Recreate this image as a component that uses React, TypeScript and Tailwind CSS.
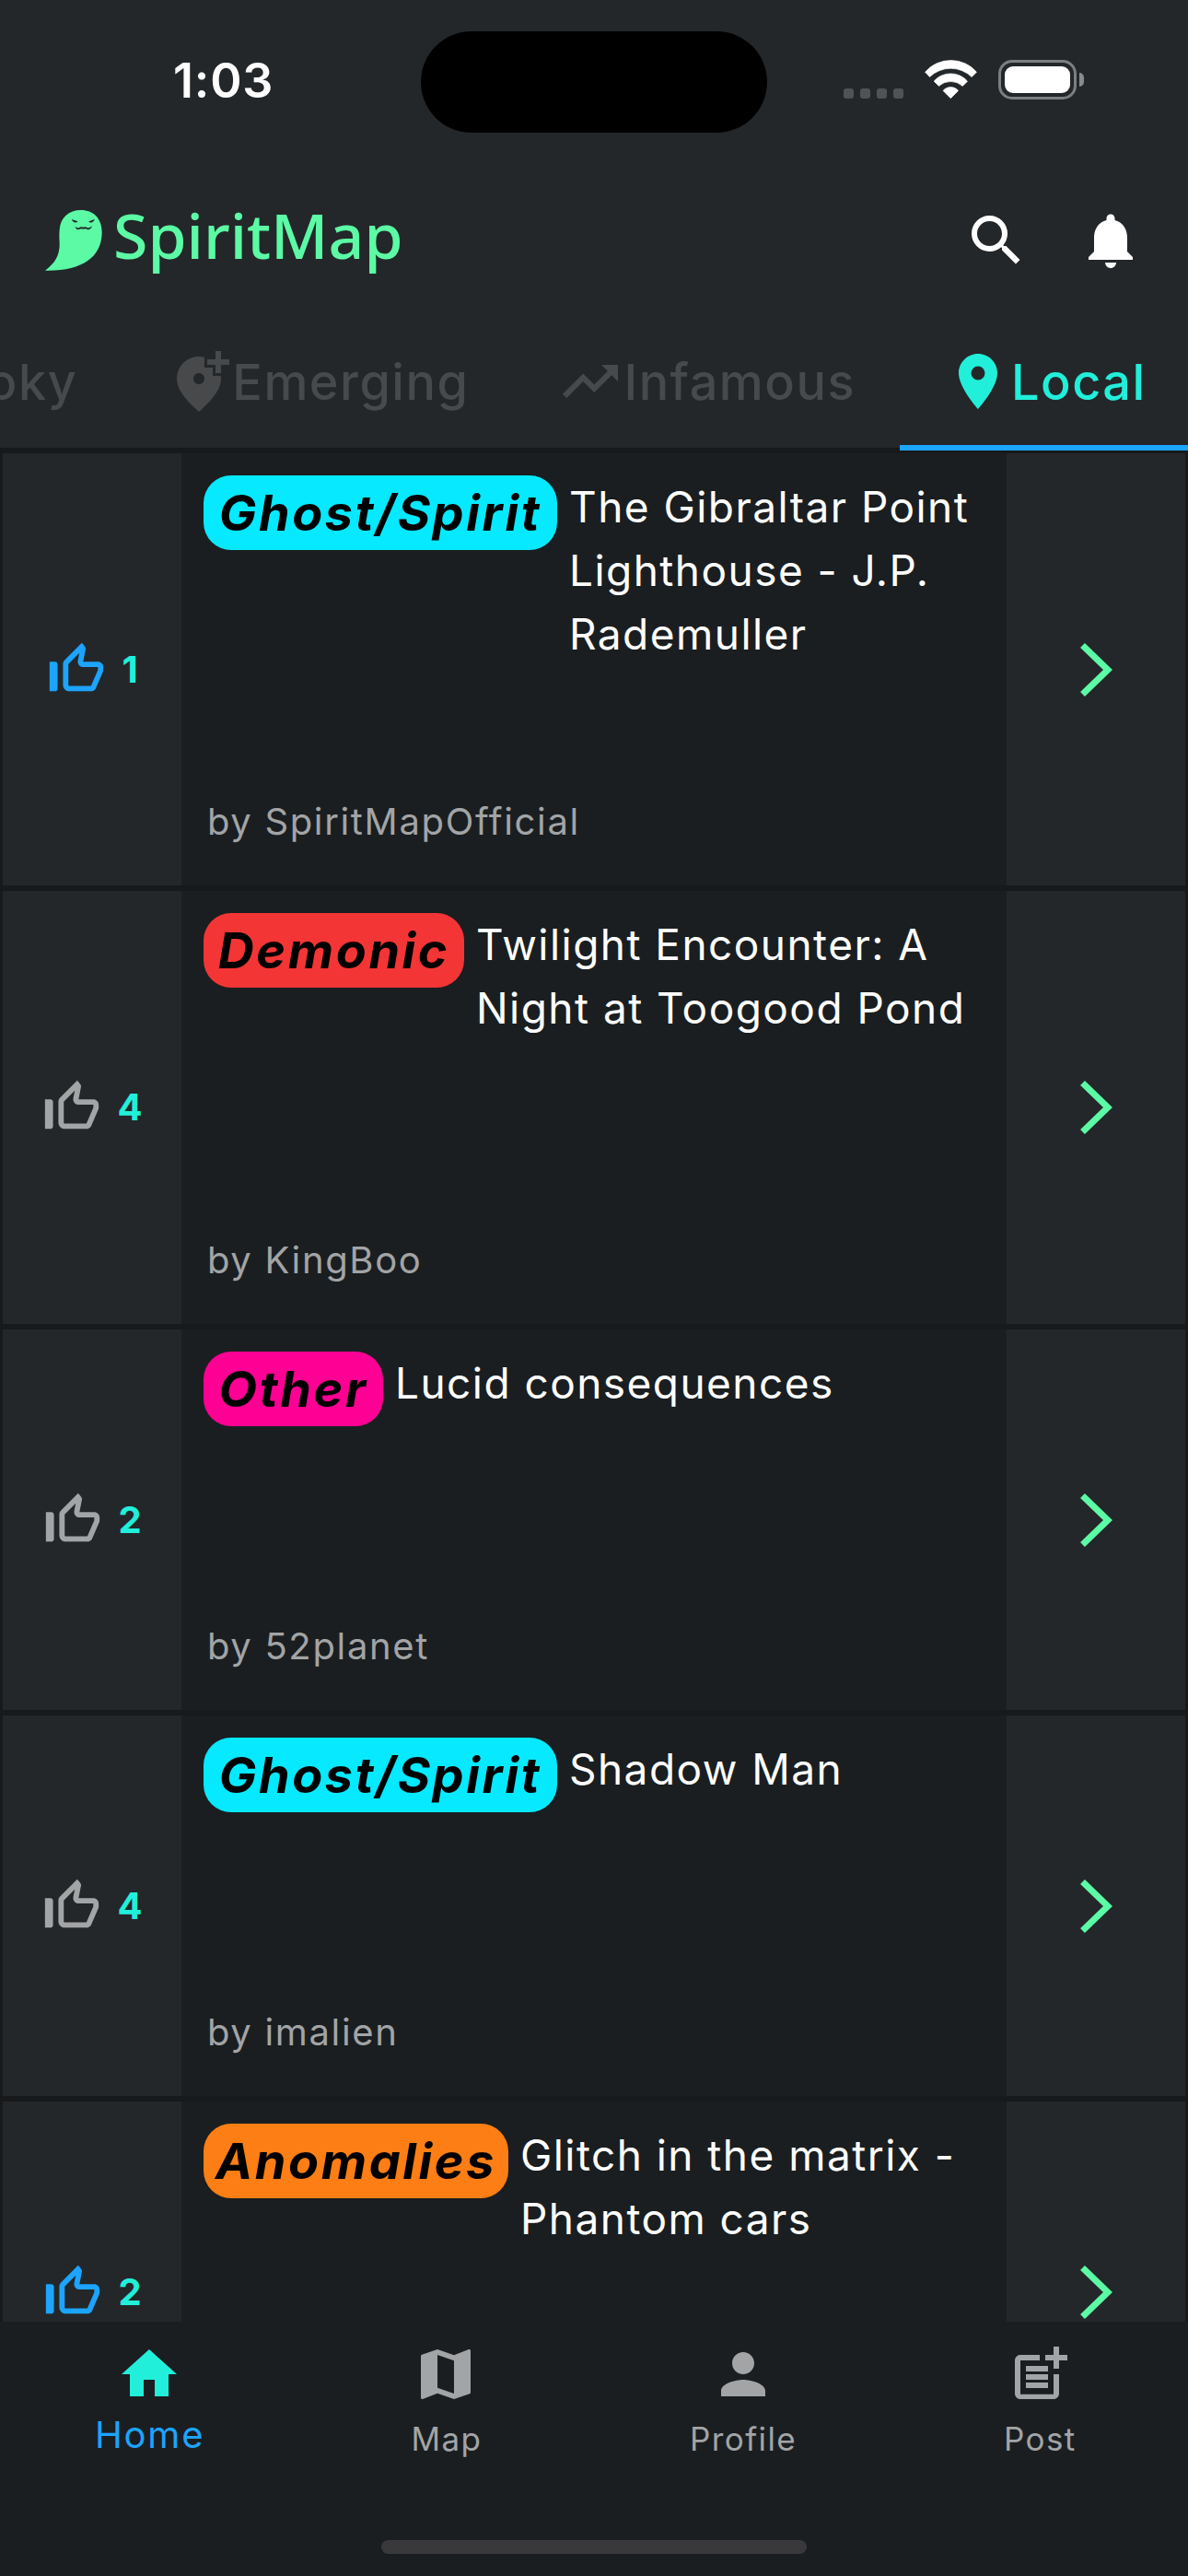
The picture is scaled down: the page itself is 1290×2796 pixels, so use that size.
import React from "react";
import type { IconType } from "react-icons";
import { MdSearch, MdNotifications, MdAddLocationAlt, MdTrendingUp, MdLocationOn, MdHome, MdMap, MdPerson, MdOutlinePostAdd } from "react-icons/md";

type Post = { tag: string; badge: string; title: string; author: string; likes: number; liked: boolean; height: string };

const posts: Post[] = [
  { tag: "Ghost/Spirit", badge: "w-[384px] bg-[#06e9ff]", title: "The Gibraltar Point Lighthouse - J.P. Rademuller", author: "SpiritMapOfficial", likes: 1, liked: true, height: "h-[475px]" },
  { tag: "Demonic", badge: "w-[283px] bg-[#f33535]", title: "Twilight Encounter: A Night at Toogood Pond", author: "KingBoo", likes: 4, liked: false, height: "h-[476px]" },
  { tag: "Other", badge: "w-[195px] bg-[#ff0094]", title: "Lucid consequences", author: "52planet", likes: 2, liked: false, height: "h-[419px]" },
  { tag: "Ghost/Spirit", badge: "w-[384px] bg-[#06e9ff]", title: "Shadow Man", author: "imalien", likes: 4, liked: false, height: "h-[419px]" },
  { tag: "Anomalies", badge: "w-[331px] bg-[#fd7e14]", title: "Glitch in the matrix - Phantom cars", author: "", likes: 2, liked: true, height: "h-[419px]" },
];

function ThumbUp({ className }: { className: string }) {
  return (
    <svg viewBox="0 0 24 24" fill="currentColor" className={className}>
      <path d="M13.11 5.72l-.57 2.89c-.12.59.04 1.2.42 1.66.38.46.94.73 1.54.73H20v1.08L17.43 18H9.34c-.18 0-.34-.16-.34-.34V9.82l4.11-4.1M14 2L7.59 8.41C7.21 8.79 7 9.3 7 9.83v7.83C7 18.95 8.05 20 9.34 20h8.1c.71 0 1.36-.37 1.72-.97l2.67-6.15c.11-.25.17-.52.17-.8V11c0-1.1-.9-2-2-2h-5.5l.92-4.65c.05-.22.02-.46-.08-.66-.23-.45-.52-.86-.88-1.22L14 2zM4 9H2v11h2c.55 0 1-.45 1-1v-9c0-.55-.45-1-1-1z" />
    </svg>
  );
}

function Ghost() {
  return (
    <svg viewBox="57 54 186 198" className="h-[66px] w-[62px]">
      <path fill="#5cfaa5" d="M174 54C213 54 242 80 242 126C242 205 182 253 57 251C90 225 104 203 104 165C104 150 102 138 104 118C107 78 134 54 174 54Z" />
      <path fill="#232729" d="M143 84L163 91Q161 96 153 94.500Q146 92 143 84ZM219 84L199 91Q201 96 209 94.500Q216 92 219 84Z" />
      <path fill="#232729" d="M155 108Q160 113 167 112Q174 106 181 110Q188 106 195 112Q202 113 210 106Q206 118 196 118Q188 113 181 116Q174 113 166 118Q157 118 155 108Z" />
    </svg>
  );
}

function Wifi() {
  return (
    <svg viewBox="72 44 171 127" fill="white" stroke="white" strokeWidth="2" strokeLinejoin="round" className="ml-[23px] h-[42px] w-[57px]">
      <path d="M73 84A112 112 0 0 1 242 84L226 100A99 99 0 0 0 88 100Z" />
      <path d="M102 114A73 73 0 0 1 212 114L196 130A58 58 0 0 0 118 130Z" />
      <path d="M132 145A33 33 0 0 1 182 145L157 170Z" />
    </svg>
  );
}

function StatusBar() {
  return (
    <div className="flex h-[177px] shrink-0 items-start">
      <div className="w-[457px] pl-[188px] pt-[58px] text-[52px] font-semibold leading-[60px] tracking-[0.8px] text-white">1:03</div>
      <div className="mt-[34px] h-[110px] w-[376px] rounded-full bg-black" />
      <div className="flex flex-1 pl-[83px] pt-[65px]">
        <div className="flex h-[42px] w-[65px] items-end justify-between">
          {[0, 1, 2, 3].map((i) => <span key={i} className="size-[11px] rounded-[3px] bg-[#505356]" />)}
        </div>
        <Wifi />
        <div className="ml-[23px] h-[43px] w-[85px] rounded-[15px] border-[3px] border-[#7c7f81] p-1">
          <div className="h-full rounded-[9px] bg-white" />
        </div>
        <div className="ml-[3px] mt-[14px] h-[15px] w-[5px] rounded-r-full bg-[#8b8b8b]" />
      </div>
    </div>
  );
}

const tabs: { label: string; icon: IconType | null; active?: boolean }[] = [
  { label: "Spooky", icon: null },
  { label: "Emerging", icon: MdAddLocationAlt },
  { label: "Infamous", icon: MdTrendingUp },
  { label: "Local", icon: MdLocationOn, active: true },
];

function Tabs() {
  return (
    <div className="relative flex h-[147px] shrink-0 justify-end overflow-hidden border-b-[6px] border-[#17191b]">
      {tabs.map((t) => (
        <div key={t.label} className={`flex h-[138px] shrink-0 items-center text-[54px] font-medium tracking-[1.5px] ${t.active ? "w-[313px] pl-[49px] text-[#21efda]" : "px-12 text-[#47494b]"}`}>
          {t.icon && <t.icon className="size-[72px] shrink-0" />}
          <span>{t.label}</span>
        </div>
      ))}
    </div>
  );
}

function Row({ post }: { post: Post }) {
  return (
    <div className={`flex shrink-0 border-x-[3px] border-b-[6px] border-[#17191b] ${post.height}`}>
      <div className="flex w-[194px] items-center justify-center gap-[14px] bg-[#232729] pr-[2px]">
        <ThumbUp className={post.liked ? "size-[70px] text-[#1ca4ff]" : "size-[70px] text-[#a2a4a6]"} />
        <span className="text-[40px] font-bold text-[#21efda]">{post.likes}</span>
      </div>
      <div className="relative flex flex-1 items-start bg-[#1a1e20] pl-6 pt-6">
        <span className={`flex h-[81px] shrink-0 items-center justify-center rounded-[30px] pb-px text-[54px] font-bold italic tracking-[2.6px] text-black ${post.badge}`}>{post.tag}</span>
        <span className="ml-[13px] mr-5 text-[46px] leading-[69px] tracking-[1.450px] text-white">{post.title}</span>
        {post.author && <span className="absolute bottom-[39px] left-[28px] text-[40px] leading-[60px] tracking-[1.650px] text-[#a2a4a6]">by {post.author}</span>}
      </div>
      <div className="flex w-[194px] items-center justify-center bg-[#232729]">
        <svg viewBox="0 0 35 58" className="h-[58px] w-[35px] text-[#5cfaa5]" fill="none" stroke="currentColor" strokeWidth="7"><path d="M2.500 2.500L30 29L2.500 55.500" /></svg>
      </div>
    </div>
  );
}

const nav: { label: string; icon: IconType; active?: boolean }[] = [
  { label: "Home", icon: MdHome, active: true },
  { label: "Map", icon: MdMap },
  { label: "Profile", icon: MdPerson },
  { label: "Post", icon: MdOutlinePostAdd },
];

function BottomNav() {
  return (
    <div className="flex h-[276px] shrink-0 flex-col items-center bg-[#1a1e20]">
      <div className="grid h-[237px] w-full grid-cols-4 pl-px pt-[21px]">
        {nav.map((n) => (
          <div key={n.label} className="flex flex-col items-center">
            <n.icon className={n.active ? "size-[72px] text-[#21efda]" : "size-[72px] text-[#a2a4a6]"} />
            <span className={n.active ? "pl-px text-[40px] leading-[60px] tracking-[1.8px] text-[#1ca4ff]" : "mt-1 pl-px text-[35px] leading-[60px] tracking-[1.4px] text-[#a2a4a6]"}>{n.label}</span>
          </div>
        ))}
      </div>
      <div className="h-[15px] w-[462px] rounded-full bg-[#39393b]" />
    </div>
  );
}

export default function App() {
  return (
    <div className="flex h-[2796px] w-[1290px] flex-col overflow-hidden bg-[#232729] font-['Inter',sans-serif]">
      <StatusBar />
      <div className="flex h-[168px] shrink-0 items-center pl-[49px] pr-12">
        <Ghost />
        <span className="mb-[13px] ml-[12px] font-['Noto_Sans',sans-serif] text-[68px] font-medium leading-[90px] text-[#5cfaa5]">SpiritMap</span>
        <MdSearch className="ml-auto size-[72px] text-white" />
        <MdNotifications className="ml-[52px] size-[72px] text-white" />
      </div>
      <div className="relative shrink-0">
        <Tabs />
        <div className="absolute bottom-[3px] right-0 h-[6px] w-[313px] bg-[#1ca4ff]" />
      </div>
      <div className="flex flex-1 flex-col overflow-hidden bg-[#17191b]">
        {posts.map((p, i) => <Row key={i} post={p} />)}
      </div>
      <BottomNav />
    </div>
  );
}
